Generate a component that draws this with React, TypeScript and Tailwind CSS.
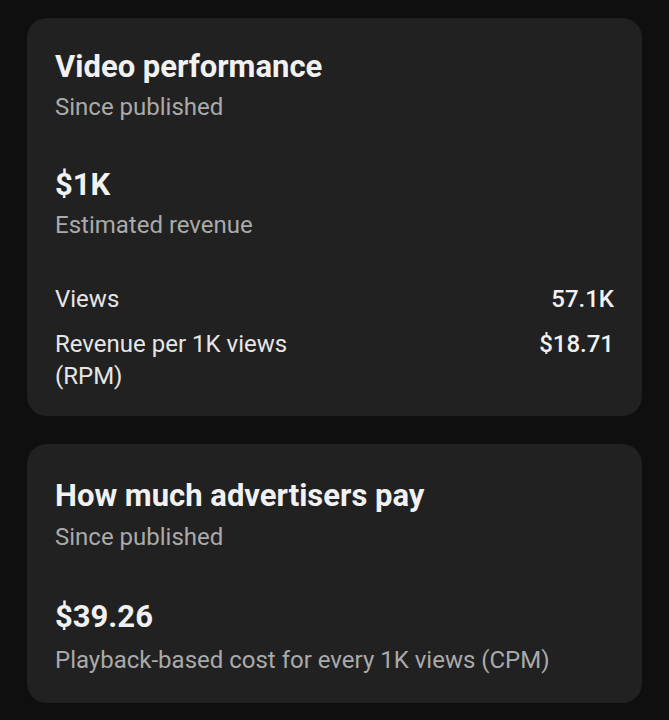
import React from "react";

function Row({ label, value }: { label: React.ReactNode; value: string }) {
  return (
    <div className="flex items-start justify-between">
      <div className="text-[24px] leading-[32px] text-[#e6e6e6]">{label}</div>
      <div className="text-[24px] leading-[32px] font-medium text-[#f1f1f1]">{value}</div>
    </div>
  );
}

export default function App() {
  return (
    <div
      className="min-h-screen bg-[#0f0f0f] px-[27px] pt-[18px] pb-4 flex flex-col gap-[28px]"
      style={{ fontFamily: "Roboto, 'Noto Sans', sans-serif" }}
    >
      {/* Video performance */}
      <div className="bg-[#212121] rounded-[20px] px-[28px] pt-[31px] pb-[24px]">
        <h2 className="text-[31px] leading-[36px] font-bold text-[#f1f1f1]">Video performance</h2>
        <p className="text-[24px] leading-[32px] text-[#aaaaaa] mt-[6px]">Since published</p>

        <p className="text-[31px] leading-[36px] font-bold text-[#f1f1f1] mt-[44px]">$1K</p>
        <p className="text-[24px] leading-[32px] text-[#aaaaaa] mt-[6px]">Estimated revenue</p>

        <div className="mt-[42px] flex flex-col gap-[13px]">
          <Row label="Views" value="57.1K" />
          <Row
            label={
              <>
                Revenue per 1K views
                <br />
                (RPM)
              </>
            }
            value="$18.71"
          />
        </div>
      </div>

      {/* How much advertisers pay */}
      <div className="bg-[#212121] rounded-[20px] px-[28px] pt-[34px] pb-[27px]">
        <h2 className="text-[31px] leading-[36px] font-bold text-[#f1f1f1]">How much advertisers pay</h2>
        <p className="text-[24px] leading-[32px] text-[#aaaaaa] mt-[7px]">Since published</p>

        <p className="text-[31px] leading-[36px] font-bold text-[#f1f1f1] mt-[46px]">$39.26</p>
        <p className="text-[24px] leading-[32px] text-[#aaaaaa] mt-[9px]">
          Playback-based cost for every 1K views (CPM)
        </p>
      </div>
    </div>
  );
}
